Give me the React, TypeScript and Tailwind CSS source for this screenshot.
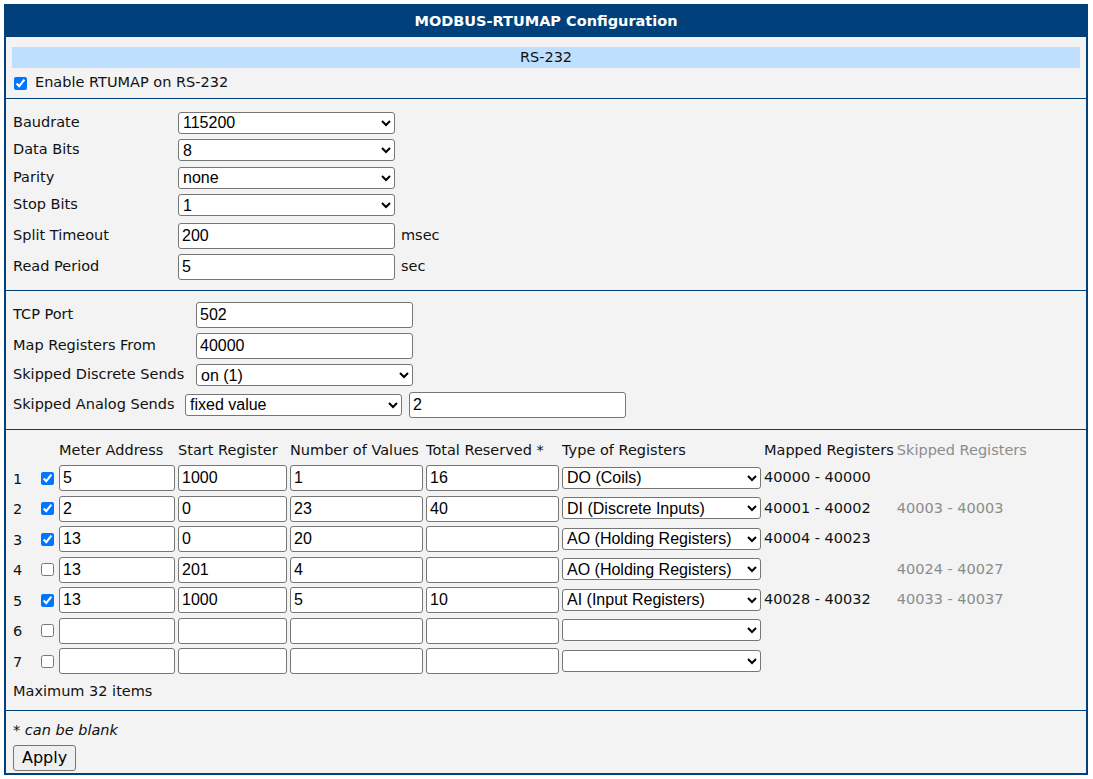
import React from "react";

const inp = "h-[26px] border border-[#767676] rounded-[3px] bg-white px-[3px] text-[16px] text-black outline-none";
const sel = "h-[22px] border border-[#767676] rounded-[3px] bg-white text-[16px] text-black";

function Sel({ w, v, opts }: { w: string; v: string; opts?: string[] }) {
  return (
    <select className={`${sel} ${w}`} defaultValue={v} style={{ fontFamily: '"Liberation Sans", Arial, sans-serif' }}>
      {(opts ?? [v]).map((o) => <option key={o}>{o}</option>)}
    </select>
  );
}
function Inp({ w, v }: { w: string; v: string }) {
  return <input className={`${inp} ${w}`} defaultValue={v} style={{ fontFamily: '"Liberation Sans", Arial, sans-serif' }} />;
}
function Cb({ on }: { on: boolean }) {
  return <input type="checkbox" defaultChecked={on} className="w-[13px] h-[13px] m-0 accent-[#0075ff]" />;
}

const rows = [
  ["5", "1000", "1", "16", "DO (Coils)", "40000 - 40000", "", true],
  ["2", "0", "23", "40", "DI (Discrete Inputs)", "40001 - 40002", "40003 - 40003", true],
  ["13", "0", "20", "", "AO (Holding Registers)", "40004 - 40023", "", true],
  ["13", "201", "4", "", "AO (Holding Registers)", "", "40024 - 40027", false],
  ["13", "1000", "5", "10", "AI (Input Registers)", "40028 - 40032", "40033 - 40037", true],
  ["", "", "", "", "", "", "", false],
  ["", "", "", "", "", "", "", false],
] as const;

export default function App() {
  return (
    <div className="w-[1093px] h-[779px] bg-white pt-[4px] pl-[4px] text-[14.5px] text-[#111]" style={{ fontFamily: '"DejaVu Sans", Verdana, sans-serif' }}>
      <div className="w-[1084px] h-[771px] border-2 border-[#00417c] bg-[#f3f3f3] flex flex-col">
        <div className="h-[31px] bg-[#00417c] text-white font-bold text-[14.5px] flex items-center justify-center shrink-0">MODBUS-RTUMAP Configuration</div>
        <div className="px-[6px] pt-[10px] pb-[6px] border-b border-[#00417c]">
          <div className="h-[21px] bg-[#bfdfff] flex items-center justify-center">RS-232</div>
          <label className="flex items-center gap-[8px] mt-[6px] ml-[2px] h-[18px]"><Cb on={true} />Enable RTUMAP on RS-232</label>
        </div>
        <div className="px-[7px] pt-[10px] pb-[8px] border-b border-[#00417c] flex flex-col">
          {[["Baudrate", "115200"], ["Data Bits", "8"], ["Parity", "none"], ["Stop Bits", "1"]].map(([l, v]) => (
            <div key={l} className="flex items-center h-[27.5px]"><span className="w-[165px]">{l}</span><Sel w="w-[217px]" v={v} /></div>
          ))}
          <div className="flex items-center h-[31px] mt-[1px]"><span className="w-[165px]">Split Timeout</span><Inp w="w-[217px]" v="200" /><span className="ml-[6px]">msec</span></div>
          <div className="flex items-center h-[31px]"><span className="w-[165px]">Read Period</span><Inp w="w-[217px]" v="5" /><span className="ml-[6px]">sec</span></div>
        </div>
        <div className="px-[7px] pt-[8px] pb-[9px] border-b border-[#00417c] flex flex-col">
          <div className="flex items-center h-[31px]"><span className="w-[183px]">TCP Port</span><Inp w="w-[217px]" v="502" /></div>
          <div className="flex items-center h-[31px]"><span className="w-[183px]">Map Registers From</span><Inp w="w-[217px]" v="40000" /></div>
          <div className="flex items-center h-[28px]"><span className="w-[183px]">Skipped Discrete Sends</span><Sel w="w-[217px]" v="on (1)" /></div>
          <div className="flex items-center h-[31px]"><span className="w-[172px]">Skipped Analog Sends</span><Sel w="w-[217px]" v="fixed value" /><span className="w-[7px]" /><Inp w="w-[217px]" v="2" /></div>
        </div>
        <div className="px-[7px] pt-[8px] pb-[8px] border-b border-[#00417c]">
          <table className="border-separate border-spacing-x-[3px] border-spacing-y-[2.5px] -ml-[3px]">
            <thead>
              <tr className="h-[22px] text-left">
                <th className="font-normal w-[25px]"></th>
                <th className="font-normal w-[15px]"></th>
                <th className="font-normal">Meter Address</th>
                <th className="font-normal">Start Register</th>
                <th className="font-normal">Number of Values</th>
                <th className="font-normal">Total Reserved *</th>
                <th className="font-normal">Type of Registers</th>
                <th className="font-normal">Mapped Registers</th>
                <th className="font-normal text-[#8c8c8c]">Skipped Registers</th>
              </tr>
            </thead>
            <tbody>
              {rows.map((r, i) => (
                <tr key={i} className="h-[28.5px]">
                  <td className="pt-[3px]">{i + 1}</td>
                  <td><div className="flex items-center"><Cb on={r[7] as boolean} /></div></td>
                  <td><Inp w="w-[116px]" v={r[0] as string} /></td>
                  <td><Inp w="w-[109px]" v={r[1] as string} /></td>
                  <td><Inp w="w-[133px]" v={r[2] as string} /></td>
                  <td><Inp w="w-[133px]" v={r[3] as string} /></td>
                  <td><Sel w="w-[199px]" v={r[4] as string} /></td>
                  <td className="whitespace-nowrap">{r[5]}</td>
                  <td className="whitespace-nowrap text-[#8c8c8c]">{r[6]}</td>
                </tr>
              ))}
            </tbody>
          </table>
          <div className="mt-[3px]">Maximum 32 items</div>
        </div>
        <div className="px-[7px] pt-[9px]">
          <div className="italic">* can be blank</div>
          <button className="mt-[3px] h-[26px] px-[8px] border border-[#767676] rounded-[3px] bg-[#efefef] text-[16px] text-black" style={{ fontFamily: '"DejaVu Sans", Verdana, sans-serif' }}>Apply</button>
        </div>
      </div>
    </div>
  );
}
